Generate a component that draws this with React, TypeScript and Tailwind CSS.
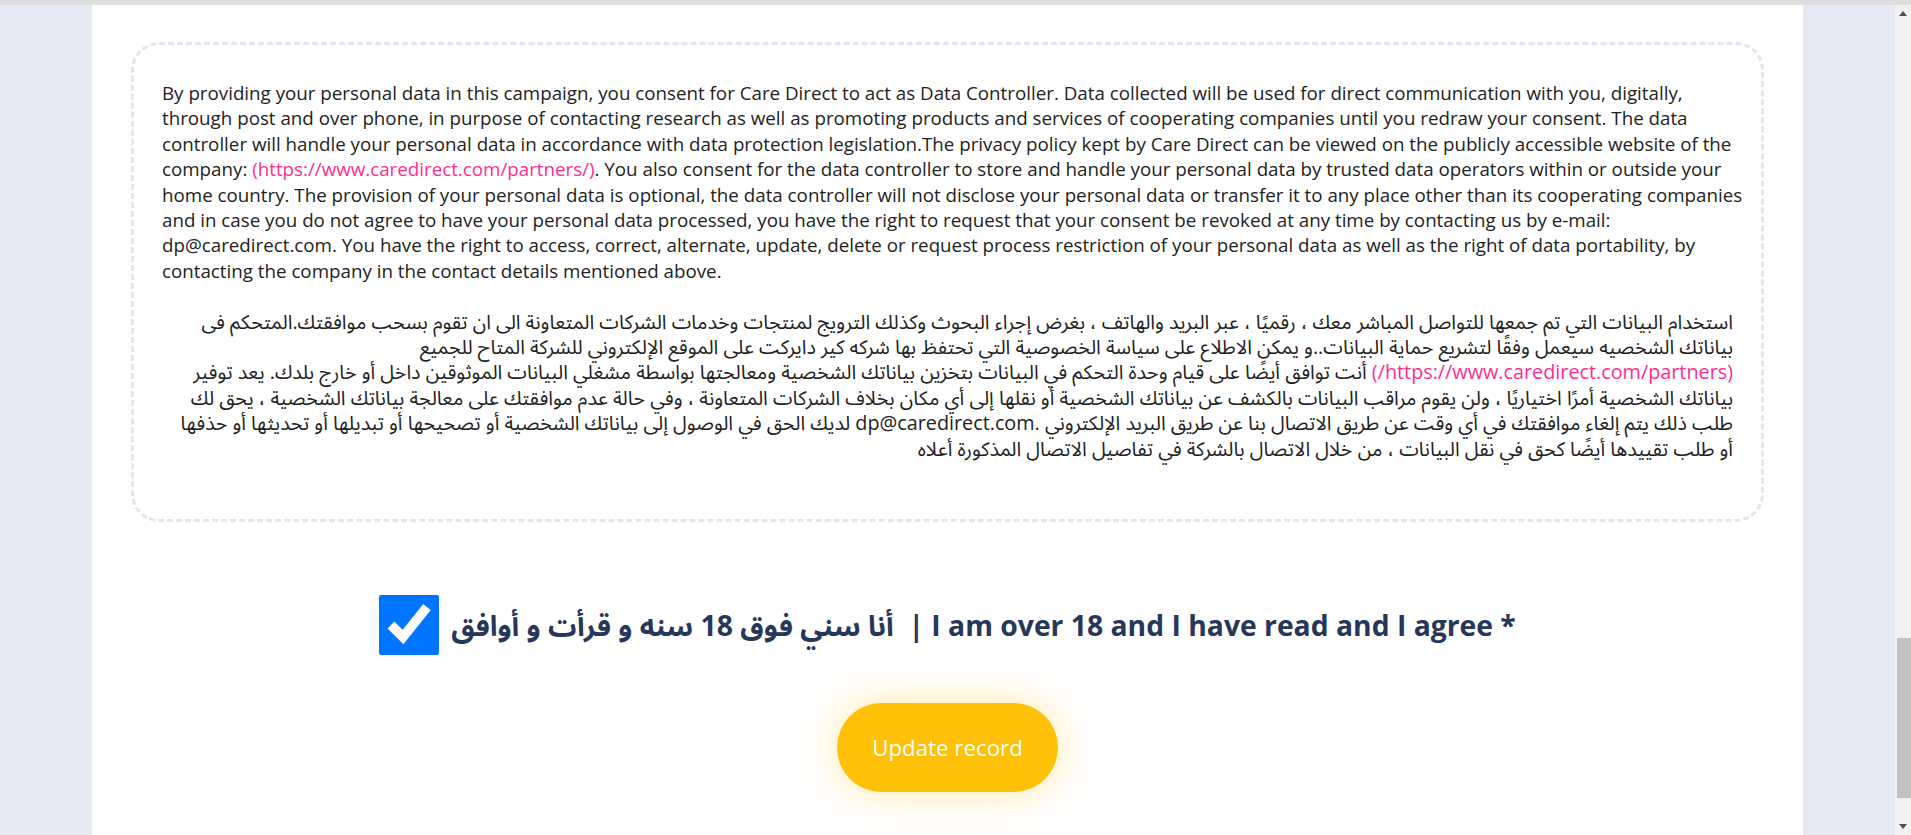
import React from 'react';

const englishLines = [
  'By providing your personal data in this campaign, you consent for Care Direct to act as Data Controller. Data collected will be used for direct communication with you, digitally,',
  'through post and over phone, in purpose of contacting research as well as promoting products and services of cooperating companies until you redraw your consent. The data',
  'controller will handle your personal data in accordance with data protection legislation.The privacy policy kept by Care Direct can be viewed on the publicly accessible website of the',
  '__LINK__',
  'home country. The provision of your personal data is optional, the data controller will not disclose your personal data or transfer it to any place other than its cooperating companies',
  'and in case you do not agree to have your personal data processed, you have the right to request that your consent be revoked at any time by contacting us by e-mail:',
  'dp@caredirect.com. You have the right to access, correct, alternate, update, delete or request process restriction of your personal data as well as the right of data portability, by',
  'contacting the company in the contact details mentioned above.',
];

const arabicLines = [
  'استخدام البيانات التي تم جمعها للتواصل المباشر معك ، رقميًا ، عبر البريد والهاتف ، بغرض إجراء البحوث وكذلك الترويج لمنتجات وخدمات الشركات المتعاونة الى ان تقوم بسحب موافقتك.المتحكم فى',
  'بياناتك الشخصيه سيعمل وفقًا لتشريع حماية البيانات..و يمكن الاطلاع على سياسة الخصوصية التي تحتفظ بها شركه كير دايركت على الموقع الإلكتروني للشركة المتاح للجميع',
  '__LINK__',
  'بياناتك الشخصية أمرًا اختياريًا ، ولن يقوم مراقب البيانات بالكشف عن بياناتك الشخصية أو نقلها إلى أي مكان بخلاف الشركات المتعاونة ، وفي حالة عدم موافقتك على معالجة بياناتك الشخصية ، يحق لك',
  'طلب ذلك يتم إلغاء موافقتك في أي وقت عن طريق الاتصال بنا عن طريق البريد الإلكتروني .dp@caredirect.com لديك الحق في الوصول إلى بياناتك الشخصية أو تصحيحها أو تبديلها أو تحديثها أو حذفها',
  'أو طلب تقييدها أيضًا كحق في نقل البيانات ، من خلال الاتصال بالشركة في تفاصيل الاتصال المذكورة أعلاه',
];

const bodyFont = "font-['Open_Sans','Noto_Sans_Arabic','DejaVu_Sans',sans-serif]";

export default function App() {
  return (
    <div className={`flex h-[835px] flex-col overflow-hidden bg-[#e5e9f4] ${bodyFont}`}>
      <div className="h-[5px] shrink-0 bg-[#dedede]" />
      <div className="flex min-h-0 flex-1">
        <div className="flex-1 px-[92px]">
          <main className="flex h-full flex-col items-center bg-white">
            <ConsentBox />

            <label className="mt-[73px] flex items-center gap-[12px]">
              <input type="checkbox" defaultChecked className="h-[60px] w-[60px] shrink-0" />
              <span className="whitespace-nowrap text-[28.3px] font-bold leading-none text-[#27375a]">
                أنا سني فوق 18 سنه و قرأت و أوافق &nbsp;| I am over 18 and I have read and I agree *
              </span>
            </label>

            <button
              type="button"
              className="mt-[48px] h-[89px] w-[221px] rounded-full bg-[#ffc107] text-[22.3px] text-white shadow-[0_0_40px_rgba(255,193,7,0.35)]"
            >
              Update record
            </button>
          </main>
        </div>
        <Scrollbar />
      </div>
    </div>
  );
}

function ConsentBox() {
  return (
    <section className="mt-[37px] w-[calc(100%-78px)] rounded-[28px] border-[3px] border-dashed border-[#e2e6f2] px-[28px] pb-[58px] pt-[35px] leading-[25.4px] text-[#222]">
      <div className="whitespace-nowrap text-[18.75px]">
        {englishLines.map((line) =>
          line === '__LINK__' ? (
            <div key={line}>
              company: <span className="text-[#ff2d8d]">(https://www.caredirect.com/partners/)</span>. You also consent for
              the data controller to store and handle your personal data by trusted data operators within or outside your
            </div>
          ) : (
            <div key={line}>{line}</div>
          ),
        )}
      </div>
      <div className="h-[25.4px]" />
      <div dir="rtl" className="whitespace-nowrap text-right text-[19.8px]">
        {arabicLines.map((line) =>
          line === '__LINK__' ? (
            <div key={line}>
              <span className="text-[#ff2d8d]">(https://www.caredirect.com/partners/)</span> أنت توافق أيضًا على قيام وحدة
              التحكم في البيانات بتخزين بياناتك الشخصية ومعالجتها بواسطة مشغلي البيانات الموثوقين داخل أو خارج بلدك. يعد توفير
            </div>
          ) : (
            <div key={line}>{line}</div>
          ),
        )}
      </div>
    </section>
  );
}

function Scrollbar() {
  return (
    <div className="flex w-[16px] shrink-0 flex-col bg-[#f1f1f1]">
      <div className="flex h-[17px] items-center justify-center">
        <span className="h-0 w-0 border-x-[4px] border-b-[5px] border-x-transparent border-b-[#505050]" />
      </div>
      <div className="h-[616px] shrink-0" />
      <div className="ml-[2px] h-[160px] shrink-0 bg-[#c1c1c1]" />
      <div className="flex-1" />
      <div className="flex h-[17px] items-center justify-center">
        <span className="h-0 w-0 border-x-[4px] border-t-[5px] border-x-transparent border-t-[#505050]" />
      </div>
    </div>
  );
}
